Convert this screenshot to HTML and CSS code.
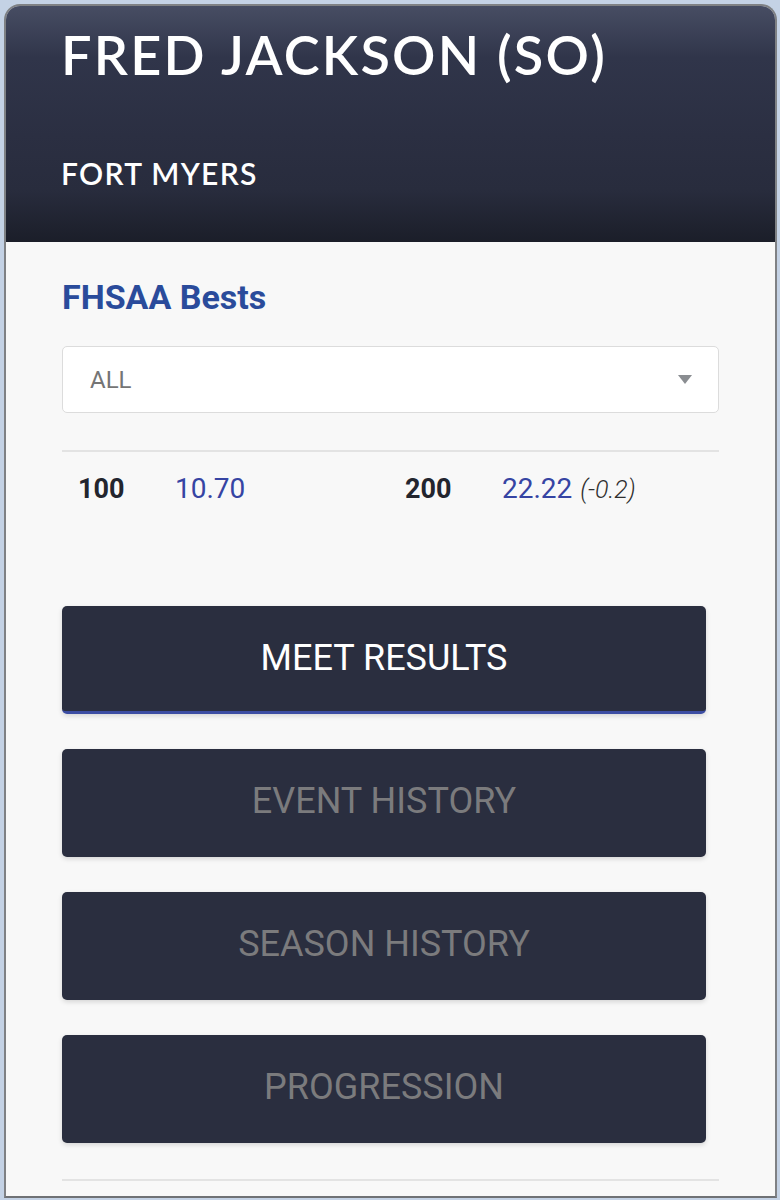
FILE: index.html
```html
<!DOCTYPE html>
<html>
<head>
<meta charset="utf-8">
<link rel="stylesheet" href="styles.css">
</head>
<body>
<div class="card">
  <header class="hero">
    <h1 class="name">FRED JACKSON (SO)</h1>
    <div class="school">FORT MYERS</div>
  </header>
  <main class="content">
    <h2 class="section-title">FHSAA Bests</h2>
    <div class="select">
      <span class="select-value">ALL</span>
      <span class="caret"></span>
    </div>
    <div class="divider"></div>
    <div class="bests">
      <div class="best">
        <span class="event">100</span>
        <span class="mark">10.70</span>
      </div>
      <div class="best">
        <span class="event">200</span>
        <span class="mark">22.22</span>
        <span class="wind">(-0.2)</span>
      </div>
    </div>
    <nav class="buttons">
      <div class="btn btn-active">MEET RESULTS</div>
      <div class="btn">EVENT HISTORY</div>
      <div class="btn">SEASON HISTORY</div>
      <div class="btn">PROGRESSION</div>
    </nav>
    <div class="divider bottom-divider"></div>
  </main>
</div>
</body>
</html>
```

FILE: styles.css
```css
html, body {
  margin: 0;
  padding: 0;
}
body {
  background: #c4d2e5;
  padding: 4px 3px 0 4px;
  font-family: Roboto, "Liberation Sans", Arial, sans-serif;
}
.card {
  border: 2px solid #7f8184;
  border-bottom: 2px solid #6f7174;
  border-radius: 16px 16px 0 0;
  overflow: hidden;
  background: #f8f8f8;
}
.hero {
  height: 236px;
  box-sizing: border-box;
  background: linear-gradient(to bottom, #474d63 0%, #30354a 22%, #2b2f42 55%, #282c3d 78%, #1b1e29 100%);
  padding: 17px 0 0 55px;
  color: #ffffff;
}
.name {
  margin: 0;
  font-family: Lato, "Open Sans", sans-serif;
  font-weight: 600;
  font-size: 54px;
  line-height: 64px;
  letter-spacing: 2.2px;
}
.school {
  margin-top: 68px;
  font-family: Lato, "Open Sans", sans-serif;
  font-weight: 600;
  font-size: 30px;
  line-height: 36px;
  letter-spacing: 1.3px;
}
.content {
  padding: 0 56px 15px 56px;
}
.section-title {
  margin: 37px 0 0 0;
  font-size: 34px;
  line-height: 36px;
  font-weight: 700;
  color: #2a4b9b;
}
.select {
  margin-top: 31px;
  height: 67px;
  box-sizing: border-box;
  background: #ffffff;
  border: 1.5px solid #dcdcdc;
  border-radius: 5px;
  display: flex;
  align-items: center;
  justify-content: space-between;
  padding: 0 26px 0 27px;
}
.select-value {
  font-size: 24px;
  color: #757575;
}
.caret {
  width: 0;
  height: 0;
  border-left: 7px solid transparent;
  border-right: 7px solid transparent;
  border-top: 9px solid #8a8d91;
}
.divider {
  height: 2px;
  background: #e3e3e3;
  margin-top: 37px;
}
.bests {
  display: grid;
  grid-template-columns: 327px 1fr;
  padding-left: 16px;
  margin-top: 17px;
}
.best {
  display: flex;
  align-items: baseline;
  line-height: 40px;
}
.event {
  width: 97px;
  font-size: 27px;
  font-weight: 700;
  color: #23252e;
}
.mark {
  font-size: 28px;
  color: #3644a3;
}
.wind {
  margin-left: 8px;
  font-size: 25px;
  font-weight: 300;
  font-style: italic;
  color: #2f2f2f;
}
.buttons {
  margin-top: 96px;
  margin-right: 13px;
  display: flex;
  flex-direction: column;
  gap: 35px;
}
.btn {
  height: 108px;
  box-sizing: border-box;
  background: #2a2e3f;
  border-radius: 5px;
  box-shadow: 0 2px 5px rgba(0, 0, 0, 0.14);
  display: flex;
  align-items: center;
  justify-content: center;
  padding-bottom: 5px;
  font-size: 36px;
  color: #7b7b7d;
}
.btn-active {
  color: #ffffff;
  border-bottom: 3px solid #3c4da3;
  padding-bottom: 2px;
}
.bottom-divider {
  margin-top: 36px;
}
```
